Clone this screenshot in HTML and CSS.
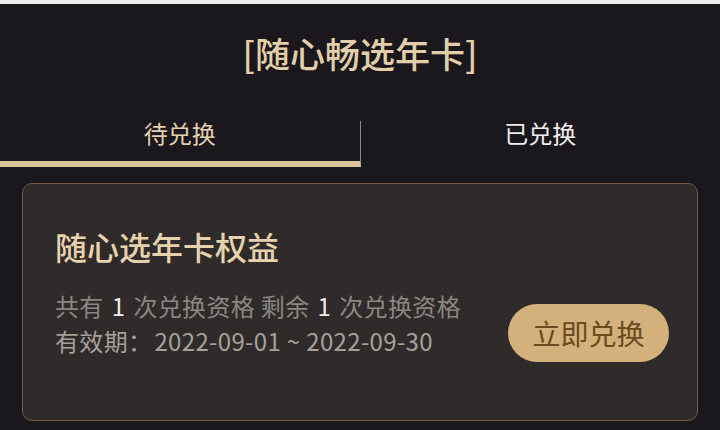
FILE: index.html
```html
<!DOCTYPE html>
<html lang="zh-CN">
<head>
<meta charset="utf-8">
<link rel="stylesheet" href="styles.css">
</head>
<body>
<div class="topbar"></div>
<h1 class="title">[随心畅选年卡]</h1>
<div class="tabs">
  <div class="tab active">待兑换</div>
  <div class="tab">已兑换</div>
</div>
<div class="card">
  <div class="card-title">随心选年卡权益</div>
  <div class="card-row">
    <div class="info">
      <div class="line1">共有<span class="num">1</span>次兑换资格 剩余<span class="num">1</span>次兑换资格</div>
      <div class="line2">有效期：<span class="date">2022-09-01 ~ 2022-09-30</span></div>
    </div>
    <button class="btn">立即兑换</button>
  </div>
</div>
</body>
</html>
```
FILE: styles.css
```css
html, body {
  margin: 0;
  padding: 0;
  background: #1b181d;
  height: 100%;
  overflow: hidden;
}
body {
  font-family: "Noto Sans CJK SC", "Noto Sans", sans-serif;
}
.topbar {
  height: 4px;
  background: #ececec;
}
.title {
  margin: 0;
  padding: 25px 0 44px;
  line-height: 48px;
  font-size: 35px;
  font-weight: 500;
  color: #e2cfaa;
  text-align: center;
}
.tabs {
  display: flex;
}
.tab {
  flex: 1;
  text-align: center;
  font-size: 24px;
  line-height: 24px;
  padding-bottom: 16px;
  color: #f0eeee;
  border-bottom: 6px solid transparent;
}
.tab.active {
  color: #e3d0ad;
  border-bottom-color: #dcc49c;
  border-right: 1px solid #8b8990;
}
.card {
  margin: 16px 22px 0;
  border: 1.5px solid #6f5e45;
  border-radius: 10px;
  background: #2f2b2b;
  padding: 42px 28px 0 32px;
  box-sizing: border-box;
  height: 238px;
}
.card-title {
  font-size: 32px;
  line-height: 40px;
  font-weight: 500;
  color: #e6d2ad;
}
.card-row {
  margin-top: 22px;
  display: flex;
  justify-content: space-between;
  align-items: flex-start;
}
.info {
  font-size: 24px;
  line-height: 35px;
  letter-spacing: 0.35px;
}
.line1 {
  color: #8c8682;
}
.num {
  color: #f2eeea;
  margin: 0 8px;
}
.line2 {
  color: #a6a09b;
}
.date {
  margin-left: 2px;
}
.btn {
  margin-top: 16px;
  width: 161px;
  height: 58px;
  border: none;
  border-radius: 29px;
  background: #d4b07c;
  color: #6b4a1e;
  font-family: "Noto Sans CJK SC", sans-serif;
  font-size: 28px;
  padding: 0;
}
```
